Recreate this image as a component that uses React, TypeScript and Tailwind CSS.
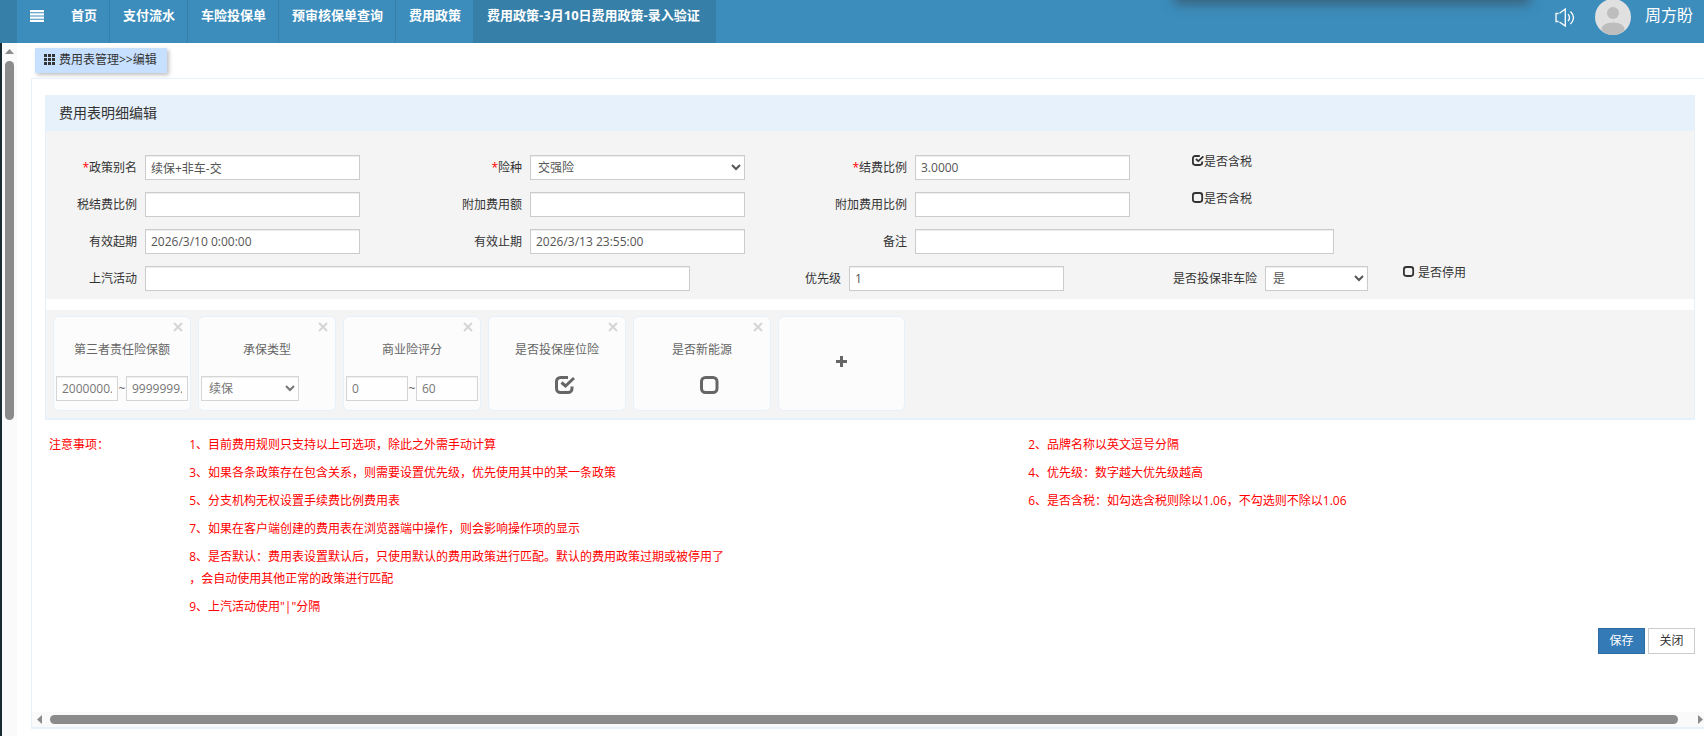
import { ReactNode } from "react"

const tabs = ["首页", "支付流水", "车险投保单", "预审核保单查询", "费用政策"]

const boxClass =
  "h-[25px] min-w-0 border border-[#ccc] bg-white text-xs text-[#555] shadow-[inset_0_1px_1px_rgba(0,0,0,0.075)] outline-none"
const inputClass = `${boxClass} px-[5px]`
const selectClass = `${boxClass} pr-[3px] pl-[3px]`

const CheckIcon = ({ checked, className }: { checked?: boolean; className: string }) => (
  <svg viewBox="0 0 20 18" className={className} fill="none" stroke="currentColor" strokeWidth="3">
    {checked ? (
      <>
        <path d="M13 1.500H5.500A4 4 0 0 0 1.500 5.500v7A4 4 0 0 0 5.500 16.500h7.500A4 4 0 0 0 17 12.500v-2" />
        <path d="M6.500 6.500l4 3.500L19 2" />
      </>
    ) : (
      <rect x="1.500" y="1.500" width="15.500" height="15" rx="4" />
    )}
  </svg>
)

const Field = ({
  id,
  label,
  required,
  labelClass = "w-[91px]",
  children,
}: {
  id: string
  label: string
  required?: boolean
  labelClass?: string
  children: ReactNode
}) => (
  <div className="flex items-center gap-2">
    <label htmlFor={id} className={`shrink-0 text-right ${labelClass}`}>
      {required && <span className="text-[#f00]">*</span>}
      {label}
    </label>
    {children}
  </div>
)

const Check = ({ label, checked, gap = "" }: { label: string; checked?: boolean; gap?: string }) => (
  <label className={`relative flex items-start self-start leading-[13px] ${gap}`}>
    <input type="checkbox" defaultChecked={checked} className="absolute inset-0 opacity-0" />
    <CheckIcon checked={checked} className="h-[11px] w-3" />
    {label}
  </label>
)

const ConditionCard = ({ title, children }: { title: string; children: ReactNode }) => (
  <div className="flex h-[95px] w-[138px] flex-col rounded-md border border-[#e8f1fb] bg-[#fcfcfc] px-0.5 text-[#666]">
    <button type="button" aria-label={`删除${title}`} className="mt-1 mr-1 self-end p-px text-[#d5d5d5]">
      <svg viewBox="0 0 10 10" className="size-[10px]" stroke="currentColor" strokeWidth="2">
        <path d="M1 1l8 8M9 1l-8 8" />
      </svg>
    </button>
    <div className="mt-2 text-center leading-[18px]">{title}</div>
    <div className="mt-[17px] flex h-[25px] items-center">{children}</div>
  </div>
)

const CardCheck = ({ label, checked }: { label: string; checked?: boolean }) => (
  <label className="relative flex w-full justify-center pl-4">
    <input type="checkbox" aria-label={label} defaultChecked={checked} className="absolute inset-0 opacity-0" />
    <CheckIcon checked={checked} className="mb-2 h-[18px] w-5" />
  </label>
)

const Range = ({ label, from, to }: { label: string; from: string; to: string }) => (
  <div className="flex w-full items-center justify-between">
    <input aria-label={`${label}下限`} defaultValue={from} className={`${inputClass} w-[62px] opacity-80`} />
    ~
    <input aria-label={`${label}上限`} defaultValue={to} className={`${inputClass} w-[62px] opacity-80`} />
  </div>
)

const Notes = () => (
  <div className="mt-[11px] grid grid-cols-[140fr_838fr_666fr] pl-1 leading-[22px] text-[#f00]">
    <div className="row-span-7 py-[3px]">注意事项：</div>
    <div className="py-[3px]">1、目前费用规则只支持以上可选项，除此之外需手动计算</div>
    <div className="py-[3px]">2、品牌名称以英文逗号分隔</div>
    <div className="py-[3px]">3、如果各条政策存在包含关系，则需要设置优先级，优先使用其中的某一条政策</div>
    <div className="py-[3px]">4、优先级：数字越大优先级越高</div>
    <div className="py-[3px]">5、分支机构无权设置手续费比例费用表</div>
    <div className="py-[3px]">6、是否含税：如勾选含税则除以1.06，不勾选则不除以1.06</div>
    <div className="col-span-2 py-[3px]">7、如果在客户端创建的费用表在浏览器端中操作，则会影响操作项的显示</div>
    <div className="col-span-2 py-[3px]">
      8、是否默认：费用表设置默认后，只使用默认的费用政策进行匹配。默认的费用政策过期或被停用了
      <br />
      ，会自动使用其他正常的政策进行匹配
    </div>
    <div className="col-span-2 py-[3px]">9、上汽活动使用"|"分隔</div>
  </div>
)

const Header = () => (
  <header className="relative flex h-[43px] overflow-hidden bg-[#3c8dbc] text-white">
    <div className="w-[17px] bg-[#367fa9]" />
    <button type="button" aria-label="菜单" className="flex w-[41px] items-start pt-[10px] pl-[13px]">
      <svg viewBox="0 0 14 12" className="h-3 w-3.5" fill="currentColor">
        <path d="M0 0h14v2.300H0zM0 3.300h14v2.200H0zM0 6.500h14v2.200H0zM0 9.700h14V12H0z" />
      </svg>
    </button>
    <nav className="flex text-[13px] leading-[20px] font-bold">
      {tabs.map((t) => (
        <a key={t} href="#" className="border-r border-[#367fa9] pt-[5px] pr-3 pl-[13px] whitespace-nowrap">
          {t}
        </a>
      ))}
      <a href="#" className="bg-[#367fa9] pt-[5px] pr-4 pl-[13px] whitespace-nowrap">
        费用政策-3月10日费用政策-录入验证
      </a>
    </nav>
    <div className="ml-auto flex items-start pr-[11px]">
      <button type="button" aria-label="声音" className="mt-2">
        <svg viewBox="0 0 20 20" className="size-5" fill="none" stroke="currentColor" strokeWidth="1.3">
          <path d="M3.500 5.500H1v8h2.500M4.500 5.200L10.300 1v17L4.500 14" />
          <path d="M13 6.200q3 3.500 0 7M15.500 3.500q6 6 0 12.500" />
        </svg>
      </button>
      <svg viewBox="0 1 36 36" className="ml-5 size-9">
        <circle cx="18" cy="18" r="18" fill="#e0e0e0" />
        <circle cx="18" cy="14" r="6" fill="#bdbdbd" />
        <path d="M6.500 31q0-7.500 11.500-7.500T29.500 31Q25 36 18 36T6.500 31z" fill="#bdbdbd" />
      </svg>
      <span className="ml-[14px] pt-[3px] text-base leading-[24px]">周方盼</span>
    </div>
    <div className="absolute -top-2 right-[178px] h-2 w-[348px] shadow-[0_0_12px_4px_rgba(55,65,75,0.6)]" />
  </header>
)

const App = () => {
  return (
    <div className="flex min-h-screen flex-col bg-white font-['Open_Sans','Noto_Sans_CJK_SC',sans-serif] text-xs text-[#333]">
      <Header />
      <div className="flex flex-1">
        <div className="w-0.5 bg-[#1a2a32]" />
        <div className="flex w-[15px] flex-col items-center bg-[#fafafa] pt-1.5">
          <svg viewBox="0 0 9 5" className="h-[5px] w-[9px]" fill="#8b8b8b">
            <path d="M4.500 0L9 5H0z" />
          </svg>
          <div className="mt-[7px] h-[359px] w-[9px] rounded-full bg-[#8b8b8b]" />
        </div>
        <div className="flex min-w-0 flex-1 flex-col pb-[7px] pl-3.5">
          <div className="mt-[5px] mb-[5px] ml-1 flex h-[25px] items-center gap-1 self-start bg-[#c7e0ff] pr-2.5 pb-0.5 pl-[9px] shadow-[2px_2px_4px_rgba(0,0,0,0.25)]">
            <svg viewBox="0 0 11 11" className="size-[11px]" fill="#333">
              <path d="M0 0h3v3H0zM4 0h3v3H4zM8 0h3v3H8zM0 4h3v3H0zM4 4h3v3H4zM8 4h3v3H8zM0 8h3v3H0zM4 8h3v3H4zM8 8h3v3H8z" />
            </svg>
            费用表管理&gt;&gt;编辑
          </div>
          <main className="flex flex-1 flex-col border-t border-b-2 border-l border-[#e7f1fb]">
            <div className="mt-4 mr-[9px] ml-[13px]">
              <section className="border border-t-0 border-b-2 border-[#e7f1fb]">
                <h1 className="h-9 bg-[#e7f1fc] pl-[13px] text-sm leading-9">费用表明细编辑</h1>
                <form className="flex flex-col gap-3 bg-[#f4f4f4] pt-6 pb-2">
                  <div className="grid grid-cols-[385fr_385fr_376fr_502fr]">
                    <Field id="alias" label="政策别名" required>
                      <input id="alias" defaultValue="续保+非车-交" className={`${inputClass} w-[215px]`} />
                    </Field>
                    <Field id="kind" label="险种" required>
                      <select id="kind" className={`${selectClass} w-[215px]`}>
                        <option>交强险</option>
                      </select>
                    </Field>
                    <Field id="rate" label="结费比例" required>
                      <input id="rate" defaultValue="3.0000" className={`${inputClass} w-[215px]`} />
                    </Field>
                    <Check label="是否含税" checked />
                  </div>
                  <div className="grid grid-cols-[385fr_385fr_376fr_502fr]">
                    <Field id="taxRate" label="税结费比例">
                      <input id="taxRate" className={`${inputClass} w-[215px]`} />
                    </Field>
                    <Field id="extraFee" label="附加费用额">
                      <input id="extraFee" className={`${inputClass} w-[215px]`} />
                    </Field>
                    <Field id="extraRate" label="附加费用比例">
                      <input id="extraRate" className={`${inputClass} w-[215px]`} />
                    </Field>
                    <Check label="是否含税" />
                  </div>
                  <div className="grid grid-cols-[385fr_385fr_878fr]">
                    <Field id="start" label="有效起期">
                      <input id="start" defaultValue="2026/3/10 0:00:00" className={`${inputClass} w-[215px]`} />
                    </Field>
                    <Field id="end" label="有效止期">
                      <input id="end" defaultValue="2026/3/13 23:55:00" className={`${inputClass} w-[215px]`} />
                    </Field>
                    <Field id="remark" label="备注">
                      <input id="remark" className={`${inputClass} w-[419px]`} />
                    </Field>
                  </div>
                  <div className="grid grid-cols-[704fr_385fr_268fr_291fr]">
                    <Field id="activity" label="上汽活动">
                      <input id="activity" className={`${inputClass} w-[545px]`} />
                    </Field>
                    <Field id="priority" label="优先级">
                      <input id="priority" defaultValue="1" className={`${inputClass} w-[215px]`} />
                    </Field>
                    <Field id="nonCar" label="是否投保非车险" labelClass="w-[122px]">
                      <select id="nonCar" className={`${selectClass} w-[103px]`}>
                        <option>是</option>
                        <option>否</option>
                      </select>
                    </Field>
                    <Check label="是否停用" gap="gap-[3px]" />
                  </div>
                </form>
                <div className="mt-[11px] flex flex-wrap gap-[7px] bg-[#f4f4f4] px-[7px] pt-1.5 pb-[7px]">
                  <ConditionCard title="第三者责任险保额">
                    <Range label="第三者责任险保额" from="2000000.00" to="9999999.00" />
                  </ConditionCard>
                  <ConditionCard title="承保类型">
                    <select aria-label="承保类型" className={`${selectClass} w-[98px] opacity-80`}>
                      <option>续保</option>
                    </select>
                  </ConditionCard>
                  <ConditionCard title="商业险评分">
                    <Range label="商业险评分" from="0" to="60" />
                  </ConditionCard>
                  <ConditionCard title="是否投保座位险">
                    <CardCheck label="是否投保座位险" checked />
                  </ConditionCard>
                  <ConditionCard title="是否新能源">
                    <CardCheck label="是否新能源" />
                  </ConditionCard>
                  <button
                    type="button"
                    aria-label="添加"
                    className="flex h-[95px] w-[127px] items-center justify-center rounded-md border border-[#e8f1fb] bg-[#fcfcfc] pb-1 text-[#666]"
                  >
                    <svg viewBox="0 0 11 11" className="size-[11px]" fill="currentColor">
                      <path d="M4 0h3v4h4v3H7v4H4V7H0V4h4z" />
                    </svg>
                  </button>
                </div>
              </section>
              <Notes />
              <div className="mt-[7px] flex justify-end gap-[3px]">
                <button type="button" className="h-[26px] w-[47px] border border-[#2e6da4] bg-[#337ab7] text-white">
                  保存
                </button>
                <button type="button" className="h-[26px] w-[47px] border border-[#ccc] bg-white">
                  关闭
                </button>
              </div>
            </div>
            <div className="mt-auto flex h-[15px] items-center bg-[#fafafa] pr-px pl-[5px]">
              <svg viewBox="0 0 5 9" className="h-[9px] w-[5px]" fill="#8b8b8b">
                <path d="M5 0v9L0 4.500z" />
              </svg>
              <div className="mr-5 ml-2 h-[9px] flex-1 rounded-full bg-[#8b8b8b]" />
              <svg viewBox="0 0 5 9" className="h-[9px] w-[5px]" fill="#8b8b8b">
                <path d="M0 0v9l5-4.500z" />
              </svg>
            </div>
          </main>
        </div>
      </div>
    </div>
  )
}

export default App
